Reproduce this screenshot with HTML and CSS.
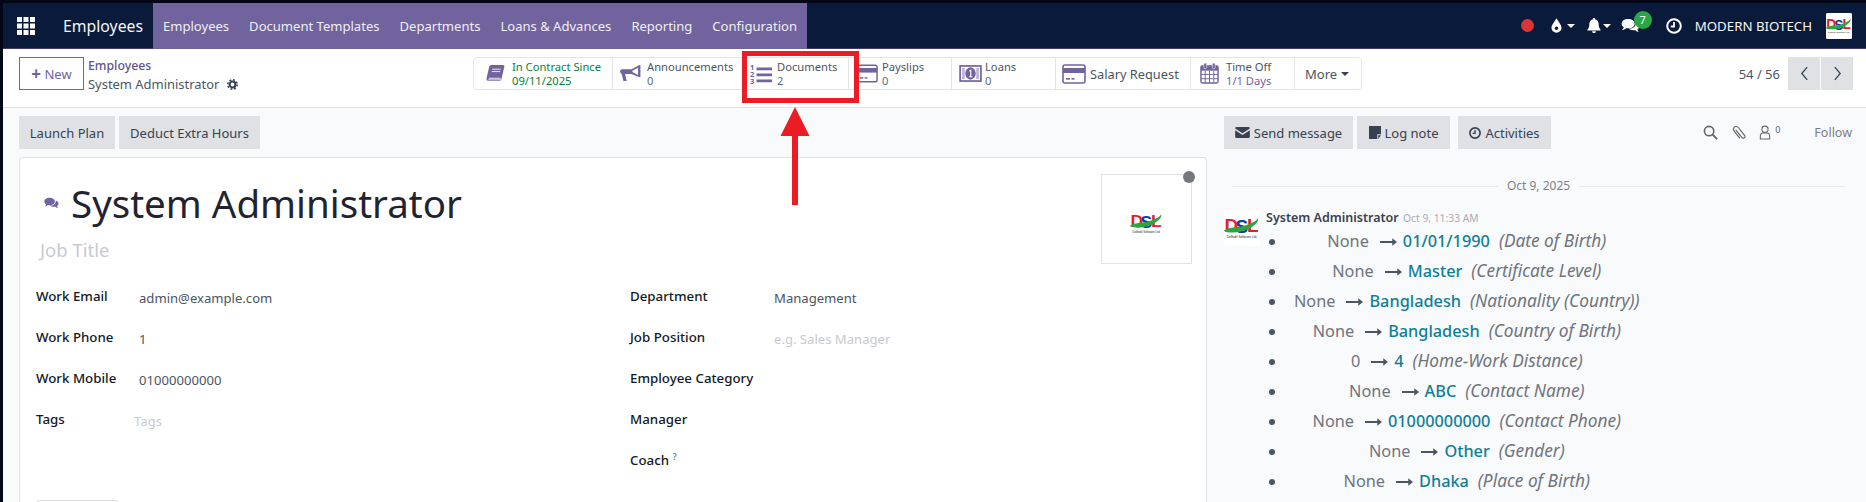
FILE: index.html
```html
<!DOCTYPE html>
<html lang="en">
<head>
<meta charset="utf-8">
<title>Employees - System Administrator</title>
<link rel="stylesheet" href="styles.css">
</head>
<body>
<svg class="defs" width="0" height="0" aria-hidden="true">
  <symbol id="card" viewBox="0 0 24 20">
    <rect x="1" y="1" width="22" height="18" rx="2" fill="none" stroke="#71639e" stroke-width="1.6"/>
    <rect x="1" y="4" width="22" height="5" fill="#71639e"/>
    <rect x="4" y="14" width="4" height="1.6" fill="#71639e"/>
    <rect x="9.5" y="14" width="3" height="1.6" fill="#71639e"/>
  </symbol>
</svg>

<header class="navbar">
  <svg class="apps" viewBox="0 0 18 18" width="18" height="18">
    <path fill="#fff" d="M0 0h5v5H0zM6.500 0h5v5h-5zM13 0h5v5h-5zM0 6.500h5v5H0zM6.500 6.500h5v5h-5zM13 6.500h5v5h-5zM0 13h5v5H0zM6.500 13h5v5h-5zM13 13h5v5h-5z"/>
  </svg>
  <span class="brand">Employees</span>
  <nav class="menu">
    <a>Employees</a><a>Document Templates</a><a>Departments</a><a>Loans &amp; Advances</a><a>Reporting</a><a>Configuration</a>
  </nav>
  <div class="systray">
    <span class="rec"></span>
    <span class="tray tray-drop">
      <svg viewBox="0 0 12 16" width="11" height="15"><path fill="#fff" d="M6 0C8 4 11.500 7 11.500 10.500A5.500 5.500 0 0 1 .5 10.500C.5 7 4 4 6 0Z"/><circle cx="6" cy="11" r="1.800" fill="#0a1a3a"/></svg>
      <i class="caret"></i>
    </span>
    <span class="tray tray-bell">
      <svg viewBox="0 0 14 16" width="14" height="15"><path fill="#fff" d="M7 0a1.300 1.300 0 0 1 1.300 1.500C11 2 12 4 12 7c0 3 1 4.500 2 5.500v.8H0v-.8C1 11.500 2 10 2 7c0-3 1-5 3.700-5.500A1.300 1.300 0 0 1 7 0ZM5 14.200h4a2 2 0 0 1-4 0Z"/></svg>
      <i class="caret"></i>
    </span>
    <span class="tray tray-chat">
      <svg viewBox="0 0 20 16" width="19" height="15"><path fill="#fff" d="M7.500 1C11.500 1 14.500 3.200 14.500 6S11.500 11 7.500 11c-.8 0-1.500-.1-2.200-.2C4 12 2.500 12.600 1 12.800c1-1 1.700-2.100 1.800-3.100C1.300 8.800.5 7.500.5 6 .5 3.200 3.500 1 7.500 1Z"/><path fill="#fff" d="M15.600 4.500c2.300.7 3.900 2.300 3.900 4.200 0 1.400-.8 2.500-2.100 3.300.1 1 .8 2.200 1.600 3-1.400-.2-2.800-.9-4-2-3 .5-5.800-.3-7-1.700 4.500.3 8.500-2.600 7.600-6.800Z"/></svg>
      <b class="badge">7</b>
    </span>
    <svg class="tray-clock" viewBox="0 0 16 16" width="16" height="16"><circle cx="8" cy="8" r="6.800" fill="none" stroke="#fff" stroke-width="2"/><path d="M8 4v4.500H4.800" fill="none" stroke="#fff" stroke-width="1.800"/></svg>
    <span class="company">MODERN BIOTECH</span>
    <svg class="logo nav-avatar" viewBox="0 0 36 36" width="28" height="26"><rect width="36" height="36" fill="#fff"/><text x="0.500" y="22" class="dsl-d">D</text><text x="11.500" y="23" class="dsl-s">S</text><text x="23" y="22" class="dsl-d">L</text><path d="M0 20.500C6 16 15 18.500 24 14.500C29 12.500 33 10.500 34 8C36 14 22 22 10 22.500C5 22.800 0 22 0 20.500Z" fill="#2aa63c"/><text x="18" y="28" class="dsl-t">Daffodil Software Ltd.</text></svg>
  </div>
</header>

<section class="panel">
  <button class="new-btn"><span class="plus">+</span> New</button>
  <div class="crumbs">
    <a>Employees</a>
    <span class="crumb-current">System Administrator
      <svg viewBox="0 0 14 14" width="11" height="11"><circle cx="7" cy="7" r="3.700" fill="none" stroke="#374151" stroke-width="2.600"/><circle cx="7" cy="7" r="6" fill="none" stroke="#374151" stroke-width="2" stroke-dasharray="2.400 2.300"/></svg>
    </span>
  </div>
  <div class="stats">
    <div class="stat stat-contract">
      <svg class="ico" viewBox="0 0 20 20" width="19" height="19"><path fill="#71639e" d="M5.500 1H18q1.700 0 1.300 1.800L16.200 16q-.5 2-2.400 2H3.200Q0 18 .7 14.800L3.400 2.700Q3.800 1 5.500 1Z"/><path d="M3 15h12.500M2.300 16.700 16 16.700M6.500 5.500h9M6 8h9" stroke="#fff" stroke-width=".9" fill="none"/></svg>
      <span class="stat-text green"><span>In Contract Since</span><span>09/11/2025</span></span>
    </div>
    <div class="stat stat-announce">
      <svg class="ico" viewBox="0 0 22 18" width="21" height="17"><path fill="#71639e" d="M20.500 0h1v13h-1L12 9.600H5.200L7 17H3.500L1.700 9.400C.600 9 0 8 0 7c0-1.500 1-2.600 2-2.600h10L20.500 0Zm-1.500 3-6 3v1.500l6 3V3Z"/></svg>
      <span class="stat-text"><span>Announcements</span><span class="num">0</span></span>
    </div>
    <div class="stat stat-docs">
      <svg class="ico" viewBox="0 -3 22 24" width="22" height="24"><text x="0" y="5" class="olnum">1</text><text x="0" y="12" class="olnum">2</text><text x="0" y="19" class="olnum">3</text><path fill="#71639e" d="M6.500 2.500H22v2.800H6.500zM6.500 8.500H22v2.800H6.500zM6.500 14.500H22v2.800H6.500z"/></svg>
      <span class="stat-text"><span>Documents</span><span class="num">2</span></span>
    </div>
    <div class="stat stat-pay">
      <svg class="ico" width="22" height="19"><use href="#card"/></svg>
      <span class="stat-text"><span>Payslips</span><span class="num">0</span></span>
    </div>
    <div class="stat stat-loans">
      <svg class="ico" viewBox="0 0 24 18" width="23" height="17"><rect x="1" y="1" width="22" height="16" fill="none" stroke="#71639e" stroke-width="1.800"/><ellipse cx="12" cy="9" rx="5.500" ry="6.500" fill="#71639e"/><rect x="3" y="3" width="3" height="12" fill="#71639e" opacity=".45"/><rect x="18" y="3" width="3" height="12" fill="#71639e" opacity=".45"/><path d="M10.700 6.500 12.300 5.500V12.500M10.500 12.500h3.500" stroke="#fff" stroke-width="1.200" fill="none"/></svg>
      <span class="stat-text"><span>Loans</span><span class="num">0</span></span>
    </div>
    <div class="stat stat-salary">
      <svg class="ico" width="24" height="20"><use href="#card"/></svg>
      <span class="stat-single">Salary Request</span>
    </div>
    <div class="stat stat-time">
      <svg class="ico" viewBox="0 0 20 22" width="19" height="21"><rect x="1" y="3" width="18" height="18" rx="1.500" fill="none" stroke="#71639e" stroke-width="1.500"/><rect x="1" y="3" width="18" height="5" fill="#71639e"/><path d="M1 12h18M1 16.500h18M5.500 8v13M10 8v13M14.500 8v13" stroke="#71639e" stroke-width="1"/><rect x="4" y="0" width="3" height="6" rx="1.500" fill="#71639e" stroke="#fff" stroke-width=".6"/><rect x="13" y="0" width="3" height="6" rx="1.500" fill="#71639e" stroke="#fff" stroke-width=".6"/></svg>
      <span class="stat-text"><span>Time Off</span><span class="purple">1/1 Days</span></span>
    </div>
    <div class="stat stat-more"><span>More</span><i class="caret caret-dark"></i></div>
  </div>
  <div class="pager">
    <span>54 / 56</span>
    <div class="pager-btns">
      <button><svg viewBox="0 0 10 16" width="9" height="15"><path d="M8 1 2 8l6 7" fill="none" stroke="#374151" stroke-width="1.400"/></svg></button>
      <button><svg viewBox="0 0 10 16" width="9" height="15"><path d="M2 1l6 7-6 7" fill="none" stroke="#374151" stroke-width="1.400"/></svg></button>
    </div>
  </div>
</section>

<main class="content">
  <div class="form-side">
    <div class="actions">
      <button class="gbtn gbtn-launch">Launch Plan</button>
      <button class="gbtn gbtn-deduct">Deduct Extra Hours</button>
    </div>
    <article class="card">
      <div class="head">
        <div class="head-main">
          <div class="title-row">
            <svg viewBox="0 0 20 16" width="15" height="12"><path fill="#71639e" d="M7.500 1C11.500 1 14.500 3.200 14.500 6S11.500 11 7.500 11c-.8 0-1.500-.1-2.200-.2C4 12 2.500 12.600 1 12.800c1-1 1.700-2.100 1.800-3.100C1.300 8.800.5 7.500.5 6 .5 3.200 3.500 1 7.500 1Z"/><path fill="#71639e" d="M15.600 4.500c2.300.7 3.900 2.300 3.900 4.200 0 1.400-.8 2.500-2.100 3.300.1 1 .8 2.200 1.600 3-1.400-.2-2.800-.9-4-2-3 .5-5.800-.3-7-1.700 4.500.3 8.500-2.600 7.600-6.800Z"/></svg>
            <h1>System Administrator</h1>
          </div>
          <div class="job-title">Job Title</div>
        </div>
        <div class="photo">
          <svg class="logo photo-logo" viewBox="0 0 36 36" width="33" height="33"><rect width="36" height="36" fill="#fff"/><text x="0.500" y="22" class="dsl-d">D</text><text x="11.500" y="23" class="dsl-s">S</text><text x="23" y="22" class="dsl-d">L</text><path d="M0 20.500C6 16 15 18.500 24 14.500C29 12.500 33 10.500 34 8C36 14 22 22 10 22.500C5 22.800 0 22 0 20.500Z" fill="#2aa63c"/><text x="18" y="28" class="dsl-t">Daffodil Software Ltd.</text></svg>
          <span class="status"></span>
        </div>
      </div>
      <div class="fields">
        <div class="col col-left">
          <label>Work Email</label><span class="val">admin@example.com</span>
          <label>Work Phone</label><span class="val">1</span>
          <label>Work Mobile</label><span class="val">01000000000</span>
          <label>Tags</label><span class="val ph ph-tags">Tags</span>
        </div>
        <div class="col col-right">
          <label>Department</label><span class="val">Management</span>
          <label>Job Position</label><span class="val ph">e.g. Sales Manager</span>
          <label>Employee Category</label><span class="val"></span>
          <label>Manager</label><span class="val"></span>
          <label>Coach <sup class="help">?</sup></label><span class="val"></span>
        </div>
      </div>
      <div class="tab"></div>
    </article>
  </div>

  <aside class="chatter">
    <div class="chat-top">
      <button class="gbtn gbtn-send">
        <svg viewBox="0 0 16 12" width="15" height="11"><path fill="#374151" d="M0 1.500A1.500 1.500 0 0 1 1.500 0h13A1.500 1.500 0 0 1 16 1.500L8 6.800 0 1.500Zm0 2v7A1.500 1.500 0 0 0 1.500 12h13a1.500 1.500 0 0 0 1.500-1.500v-7L8 8.800 0 3.500Z"/></svg>
        Send message</button>
      <button class="gbtn gbtn-log">
        <svg viewBox="0 0 13 14" width="12" height="13"><path fill="#374151" d="M0 0h13v9H9v5H0zM10 10h3l-3 4z"/></svg>
        Log note</button>
      <button class="gbtn gbtn-act">
        <svg viewBox="0 0 16 16" width="12" height="12"><circle cx="8" cy="8" r="6.800" fill="none" stroke="#374151" stroke-width="2.200"/><path d="M8 4v4.500H4.800" fill="none" stroke="#374151" stroke-width="1.800"/></svg>
        Activities</button>
      <div class="chat-tools">
        <svg class="t-search" viewBox="0 0 16 16" width="15" height="15"><circle cx="6.500" cy="6.500" r="5" fill="none" stroke="#5f636a" stroke-width="1.700"/><path d="M10.300 10.300 15 15" stroke="#5f636a" stroke-width="2"/></svg>
        <svg class="t-clip" viewBox="0 0 16 16" width="15" height="16"><path d="M4 5 10.500 13c1.500 1.700 4 .4 3.200-1.700L7 2.700C5.800 1 3 1 2 2.500 1 3.800 1.300 5 2.300 6.300L8.500 14" transform="translate(0 -.3)" fill="none" stroke="#5f636a" stroke-width="1.200"/></svg>
        <span class="t-user">
          <svg viewBox="0 0 12 16" width="12" height="15"><circle cx="6" cy="4.500" r="3.300" fill="none" stroke="#5f636a" stroke-width="1.100"/><path d="M1 15v-3c0-2 1.500-3.500 3-3.500h4c1.500 0 3 1.500 3 3.500v3z" fill="none" stroke="#5f636a" stroke-width="1.100"/></svg>
          <sup>0</sup>
        </span>
        <span class="follow">Follow</span>
      </div>
    </div>
    <div class="date-sep"><span>Oct 9, 2025</span></div>
    <div class="message">
      <svg class="logo msg-avatar" viewBox="0 0 36 36" width="36" height="36"><rect width="36" height="36" fill="#fff"/><text x="0.500" y="22" class="dsl-d">D</text><text x="11.500" y="23" class="dsl-s">S</text><text x="23" y="22" class="dsl-d">L</text><path d="M0 20.500C6 16 15 18.500 24 14.500C29 12.500 33 10.500 34 8C36 14 22 22 10 22.500C5 22.800 0 22 0 20.500Z" fill="#2aa63c"/><text x="18" y="28" class="dsl-t">Daffodil Software Ltd.</text></svg>
      <div class="msg-body">
        <div class="msg-head"><b>System Administrator</b> <small>Oct 9, 11:33 AM</small></div>
        <ul class="changes">
          <li>None<svg class="arrow" viewBox="0 0 18 8" width="17" height="8"><path fill="#4b5563" d="M0 3h13V0l5 4-5 4V5H0z"/></svg><b>01/01/1990</b><em>(Date of Birth)</em></li>
          <li>None<svg class="arrow" viewBox="0 0 18 8" width="17" height="8"><path fill="#4b5563" d="M0 3h13V0l5 4-5 4V5H0z"/></svg><b>Master</b><em>(Certificate Level)</em></li>
          <li>None<svg class="arrow" viewBox="0 0 18 8" width="17" height="8"><path fill="#4b5563" d="M0 3h13V0l5 4-5 4V5H0z"/></svg><b>Bangladesh</b><em>(Nationality (Country))</em></li>
          <li>None<svg class="arrow" viewBox="0 0 18 8" width="17" height="8"><path fill="#4b5563" d="M0 3h13V0l5 4-5 4V5H0z"/></svg><b>Bangladesh</b><em>(Country of Birth)</em></li>
          <li>0<svg class="arrow" viewBox="0 0 18 8" width="17" height="8"><path fill="#4b5563" d="M0 3h13V0l5 4-5 4V5H0z"/></svg><b>4</b><em>(Home-Work Distance)</em></li>
          <li>None<svg class="arrow" viewBox="0 0 18 8" width="17" height="8"><path fill="#4b5563" d="M0 3h13V0l5 4-5 4V5H0z"/></svg><b>ABC</b><em>(Contact Name)</em></li>
          <li>None<svg class="arrow" viewBox="0 0 18 8" width="17" height="8"><path fill="#4b5563" d="M0 3h13V0l5 4-5 4V5H0z"/></svg><b>01000000000</b><em>(Contact Phone)</em></li>
          <li>None<svg class="arrow" viewBox="0 0 18 8" width="17" height="8"><path fill="#4b5563" d="M0 3h13V0l5 4-5 4V5H0z"/></svg><b>Other</b><em>(Gender)</em></li>
          <li>None<svg class="arrow" viewBox="0 0 18 8" width="17" height="8"><path fill="#4b5563" d="M0 3h13V0l5 4-5 4V5H0z"/></svg><b>Dhaka</b><em>(Place of Birth)</em></li>
        </ul>
      </div>
    </div>
  </aside>
</main>

<div class="mark-box"></div>
<svg class="mark-arrow" viewBox="0 0 30 98" width="30" height="98"><path fill="#ec1c24" d="M15 0 29.500 29H18V98H12V29H.5Z"/></svg>
</body>
</html>
```

FILE: styles.css
```css
* { box-sizing: border-box; }
html, body { margin: 0; height: 502px; overflow: hidden; }
body {
  position: relative;
  background: #f9fafb;
  border-top: 3px solid #030617;
  border-left: 3px solid #030617;
  font-family: "Noto Sans", "Open Sans", sans-serif;
  font-size: 13px;
  color: #374151;
}
.defs { position: absolute; }
button { font: inherit; color: inherit; border: 0; }
.dsl-d { font: 700 19px "Liberation Sans", sans-serif; fill: #ea1c24; }
.dsl-s { font: 700 19px "Liberation Sans", sans-serif; fill: #0a3fa8; }
.dsl-t { font: 3.200px "Liberation Sans", sans-serif; fill: #222; text-anchor: middle; }

/* navbar */
.navbar {
  height: 46px;
  background: #0a1a3a;
  display: flex;
  align-items: center;
  color: #fff;
  border-bottom: 1px solid #3f3a68;
}
.apps { margin-left: 14px; flex: none; }
.brand { margin-left: 28px; font-size: 15.800px; width: 90px; color: #f4f4f6; flex: none; }
.menu {
  display: flex;
  align-self: stretch;
  background: #71639e;
  padding: 0 10px;
  margin-bottom: -1px;
  gap: 20px;
  align-items: center;
  font-size: 13.050px;
  color: #f0eef5;
}
.systray { margin-left: auto; display: flex; align-items: center; padding-right: 13px; }
.rec { width: 13px; height: 13px; border-radius: 50%; background: #d9363a; }
.tray { display: inline-flex; align-items: center; position: relative; }
.tray-drop { margin-left: 17px; gap: 5px; }
.tray-bell { margin-left: 12px; gap: 2px; }
.tray-chat { margin-left: 10px; }
.caret {
  display: inline-block;
  width: 0; height: 0;
  border: 4px solid transparent;
  border-top-color: #fff;
  border-bottom: 0;
}
.badge {
  position: absolute;
  left: 13px; top: -7px;
  width: 18px; height: 18px;
  border-radius: 50%;
  background: #28a745;
  color: #fff;
  font-size: 11px;
  font-weight: 400;
  line-height: 18px;
  text-align: center;
}
.tray-clock { margin-left: 26px; }
.company { margin-left: 13px; font-size: 13.270px; color: #f4f4f6; }
.nav-avatar { margin-left: 13px; border-radius: 3px; }

/* control panel */
.panel {
  height: 59px;
  background: #fff;
  border-bottom: 1px solid #dfe1e6;
  display: flex;
  align-items: flex-start;
  padding: 8px 13px 0 16px;
}
.new-btn {
  width: 65px; height: 33px;
  background: #fff;
  border: 1px solid #71639e;
  color: #71639e;
  padding: 0;
  font-size: 13px;
}
.plus { font-weight: 700; font-size: 17px; line-height: 1; vertical-align: -1px; }
.crumbs {
  display: flex;
  flex-direction: column;
  margin: -1px 0 0 4px;
  width: 385px;
  font-size: 12.950px;
  line-height: 19px;
  color: #4b5563;
}
.crumbs a { color: #5f5488; font-size: 12.300px; font-weight: 500; }
.crumb-current svg { vertical-align: -1px; margin-left: 4px; }
.stats {
  display: grid;
  grid-template-columns: 139px 134px 102px 103px 104px 135px 104px 68px;
  height: 33px;
  width: 889px;
  background: #fff;
  border: 1px solid #e2e4e8;
  border-radius: 4px;
}
.stat {
  display: flex;
  align-items: center;
  border-right: 1px solid #e2e4e8;
  line-height: 14px;
  font-size: 11.200px;
  white-space: nowrap;
}
.stat:last-child { border-right: 0; }
.stat-contract { padding-left: 12px; gap: 7px; }
.stat-announce { padding-left: 7px; gap: 6px; }
.stat-docs { padding-left: 3px; gap: 5px; }
.stat-pay { padding-left: 7px; gap: 4px; }
.stat-loans { padding-left: 7px; gap: 3px; }
.stat-salary { padding-left: 6px; gap: 4px; }
.stat-time { padding-left: 9px; gap: 7px; }
.stat-more { padding-left: 10px; gap: 4px; font-size: 13px; color: #4b5563; }
.stat-single { font-size: 12.800px; color: #4b5563; }
.stat-text { display: flex; flex-direction: column; color: #4b5563; }
.stat-text .num { color: #5f6b80; }
.stat-text.green { color: #00843d; }
.stat-text .purple { color: #71639e; }
.olnum { font: 700 7.500px "Noto Sans", sans-serif; fill: #71639e; }
.caret-dark { border-top-color: #374151; vertical-align: 2px; }
.pager { margin-left: auto; display: flex; align-items: center; gap: 8px; height: 33px; font-size: 13px; color: #4b5563; }
.pager-btns { display: flex; gap: 1px; }
.pager-btns button {
  width: 32px; height: 33px;
  background: #dfe1e5;
  display: flex;
  align-items: center;
  justify-content: center;
  padding: 0;
}

/* content */
.content { display: flex; align-items: flex-start; }
.form-side { width: 1221px; padding: 8px 0 0 16px; flex: none; }
.actions { display: flex; gap: 4px; }
.gbtn {
  height: 33px;
  background: #dfe1e5;
  color: #374151;
  font-size: 13px;
  padding: 0;
  display: inline-flex;
  align-items: center;
  justify-content: center;
  gap: 4px;
}
.gbtn-launch { width: 96px; }
.gbtn-deduct { width: 141px; }
.card {
  margin-top: 8px;
  width: 1188px;
  height: 345px;
  background: #fff;
  border: 1px solid #e0e2e7;
  border-bottom: 0;
  border-radius: 4px 4px 0 0;
  padding: 16px 15px 0 16px;
}
.head { display: flex; justify-content: space-between; }
.title-row { display: flex; align-items: center; gap: 12px; margin-left: 8px; height: 52px; padding-top: 5px; }
.title-row svg { flex: none; }
h1 { margin: 0; font-size: 38.500px; font-weight: 400; color: #1f2430; line-height: 52px; }
.job-title { margin: 11px 0 0 4px; font-size: 18.500px; line-height: 26px; color: #c7cad0; }
.photo {
  position: relative;
  width: 91px; height: 90px;
  border: 1px solid #e0e2e7;
  display: flex;
  align-items: center;
  justify-content: center;
  margin-right: -1px;
}
.photo-logo { margin-top: 8px; }
.status {
  position: absolute;
  top: -4px; right: -4px;
  width: 12px; height: 12px;
  border-radius: 50%;
  background: #74787e;
}
.fields { display: grid; grid-template-columns: 594px 1fr; margin-top: 11px; }
.col { display: grid; grid-auto-rows: 41px; align-items: center; }
.col-left { grid-template-columns: 103px 1fr; }
.col-right { grid-template-columns: 144px 1fr; }
label { font-weight: 500; color: #111827; font-size: 13.300px; }
.val { color: #4b5563; padding-top: 4px; font-size: 13.100px; }
.ph { color: #c7cad0; }
.ph-tags { margin-left: -5px; }
.help { color: #0d8fc7; font-size: 9px; }
.tab {
  margin-top: 20px;
  width: 83px; height: 30px;
  border: 1px solid #d8dadf;
  border-radius: 4px 4px 0 0;
}

/* chatter */
.chatter { flex: 1; padding: 8px 14px 0 0; min-width: 0; }
.chat-top { display: flex; align-items: center; }
.gbtn-send { width: 129px; }
.gbtn-log { width: 93px; margin-left: 4px; }
.gbtn-act { width: 93px; margin-left: 8px; }
.chat-tools { margin-left: auto; display: flex; align-items: center; color: #5f636a; }
.t-clip { margin-left: 14.500px; }
.t-user { margin-left: 12px; display: inline-flex; align-items: flex-start; }
.t-user sup { font-size: 9px; line-height: 9px; margin-left: 4px; }
.follow { margin-left: 34px; font-size: 12.500px; color: #7a7f87; }
.date-sep {
  display: flex;
  align-items: center;
  gap: 9px;
  margin: 28px 7px 0 8px;
  font-size: 12px;
  line-height: 18px;
  color: #7d8289;
}
.date-sep::before, .date-sep::after { content: ""; flex: 1; height: 1px; background: #e8e9ec; }
.message { display: flex; margin-top: 15px; }
.msg-avatar { flex: none; }
.msg-body { margin-left: 6px; }
.msg-head { font-size: 12.500px; line-height: 16px; color: #374151; }
.msg-head b { font-weight: 600; }
.msg-head small { font-size: 10.300px; color: #a9acb2; margin-left: 1px; }
.changes {
  margin: 0;
  padding: 0 0 0 21px;
  width: fit-content;
  list-style: disc;
  font-size: 16.300px;
}
.changes li {
  padding-left: 7px;
  text-align: center;
  line-height: 30px;
  color: #6f747c;
  white-space: nowrap;
}
.changes li::marker { color: #4b5563; font-size: 16px; }
.changes b { font-weight: 500; color: #0f7f99; }
.changes em { margin-left: 9px; font-size: 17.300px; color: #6f747c; }
.arrow { margin: 0 6px 0 11px; vertical-align: 1px; }

/* annotation over the screenshot */
.mark-box {
  position: absolute;
  left: 739px; top: 48px;
  width: 117px; height: 52px;
  border: 5px solid #ec1c24;
}
.mark-arrow { position: absolute; left: 777px; top: 104px; }
```
